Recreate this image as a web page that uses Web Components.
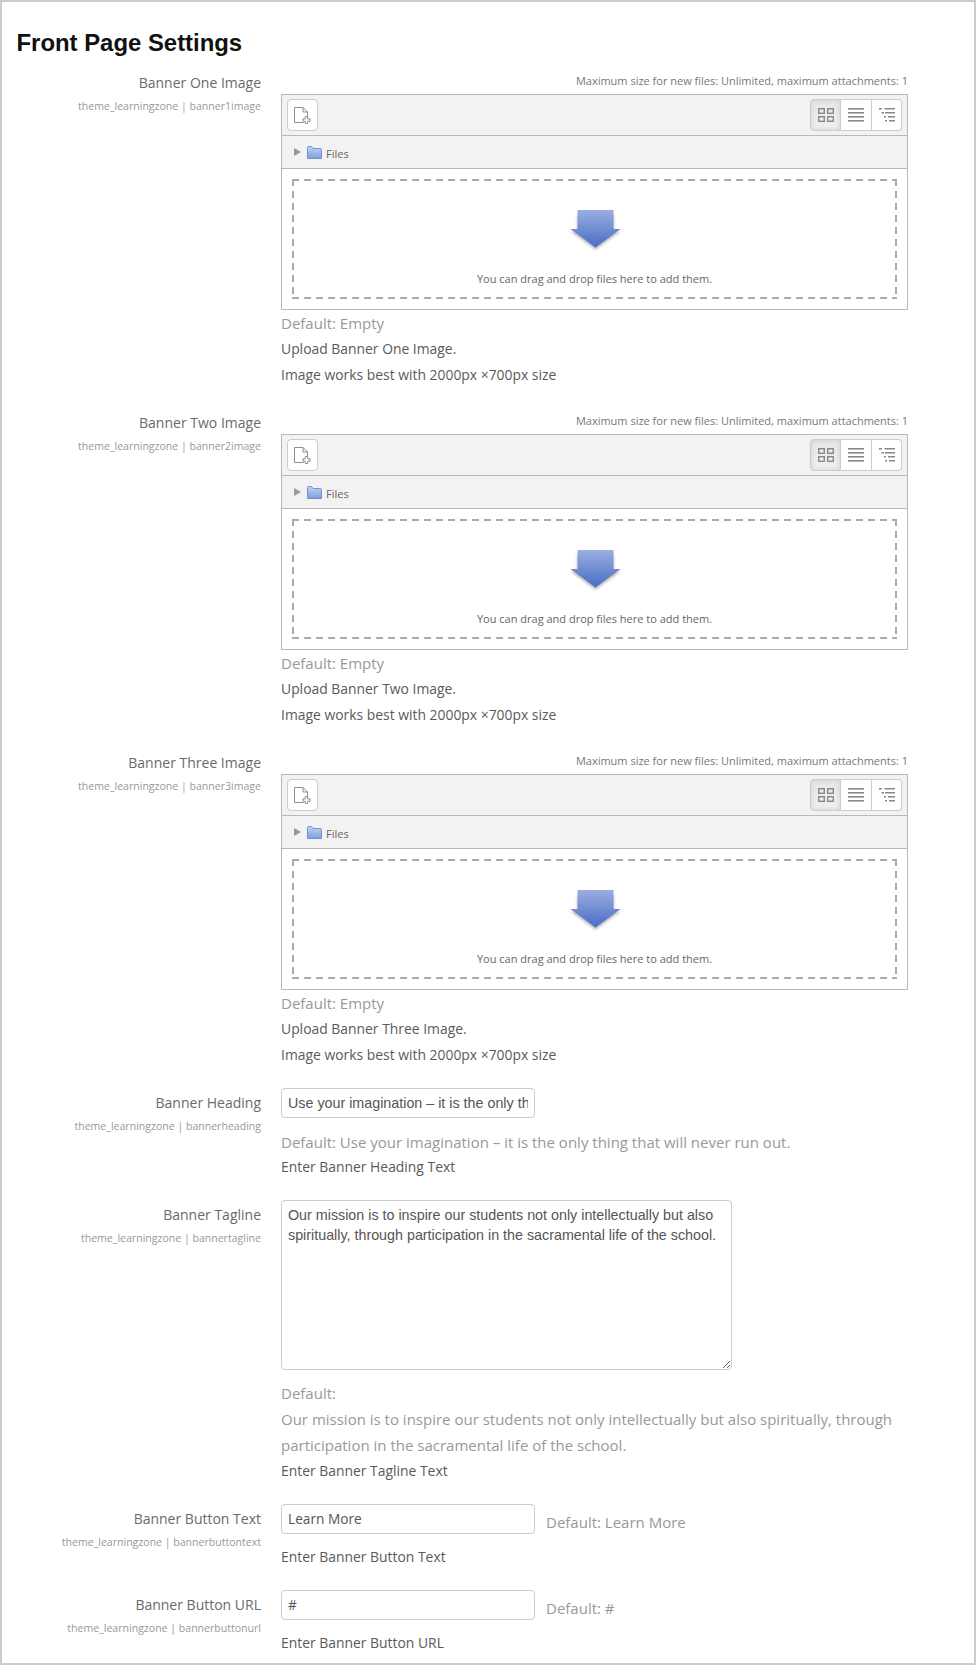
<!DOCTYPE html>
<html lang="en">
<head>
<meta charset="utf-8">
<title>Front Page Settings</title>
<style>
html, body { margin: 0; padding: 0; background: #fff; }
body { font-family: "Open Sans", sans-serif; color: #555; }
</style>
</head>
<body>
<settings-page heading="Front Page Settings">
    <setting-row label="Banner One Image" name="theme_learningzone | banner1image">
        <file-picker></file-picker>
        <setting-default block>Default: Empty</setting-default>
        <setting-note>Upload Banner One Image.</setting-note>
        <setting-note>Image works best with 2000px ×700px size</setting-note>
    </setting-row>
    <setting-row label="Banner Two Image" name="theme_learningzone | banner2image">
        <file-picker></file-picker>
        <setting-default block>Default: Empty</setting-default>
        <setting-note>Upload Banner Two Image.</setting-note>
        <setting-note>Image works best with 2000px ×700px size</setting-note>
    </setting-row>
    <setting-row label="Banner Three Image" name="theme_learningzone | banner3image">
        <file-picker></file-picker>
        <setting-default block>Default: Empty</setting-default>
        <setting-note>Upload Banner Three Image.</setting-note>
        <setting-note>Image works best with 2000px ×700px size</setting-note>
    </setting-row>
    <setting-row label="Banner Heading" name="theme_learningzone | bannerheading">
        <text-field sans>Use your imagination – it is the only th</text-field>
        <setting-default block spaced>Default: Use your imagination – it is the only thing that will never run out.</setting-default>
        <setting-note>Enter Banner Heading Text</setting-note>
    </setting-row>
    <setting-row label="Banner Tagline" name="theme_learningzone | bannertagline">
        <text-area>Our mission is to inspire our students not only intellectually but also spiritually, through participation in the sacramental life of the school.</text-area>
        <setting-default block spaced flush>Default:<br>Our mission is to inspire our students not only intellectually but also spiritually, through participation in the sacramental life of the school.</setting-default>
        <setting-note>Enter Banner Tagline Text</setting-note>
    </setting-row>
    <setting-row label="Banner Button Text" name="theme_learningzone | bannerbuttontext">
        <field-line>
            <text-field>Learn More</text-field>
            <setting-default>Default: Learn More</setting-default>
        </field-line>
        <setting-note spaced>Enter Banner Button Text</setting-note>
    </setting-row>
    <setting-row label="Banner Button URL" name="theme_learningzone | bannerbuttonurl">
        <field-line>
            <text-field>#</text-field>
            <setting-default>Default: #</setting-default>
        </field-line>
        <setting-note spaced>Enter Banner Button URL</setting-note>
    </setting-row>
</settings-page>

<script>
class SettingsPage extends HTMLElement {
    constructor() {
        super();
        this.attachShadow({mode: 'open'});
        this.shadowRoot.innerHTML = `
        <style>
        :host {
            display: block;
            box-sizing: border-box;
            height: 1665px;
            border: 2px solid #ccc;
            background: #fff;
            overflow: hidden;
        }
        h2 {
            margin: 0;
            padding: 28px 0 12px 14.5px;
            font: bold 23.9px/26px "Liberation Sans", Arial, sans-serif;
            color: #111;
        }
        </style>
        <h2></h2>
        <slot></slot>
        `;
        this.shadowRoot.querySelector("h2").textContent = this.getAttribute("heading");
    }
}

class SettingRow extends HTMLElement {
    constructor() {
        super();
        this.attachShadow({mode: 'open'});
        this.shadowRoot.innerHTML = `
        <style>
        :host {
            display: grid;
            grid-template-columns: 259px 627px;
            column-gap: 20px;
            padding-bottom: 20px;
        }
        .title { text-align: right; padding-top: 2px; }
        .label { font-size: 14px; line-height: 26px; color: #6a6a6a; }
        .name { font-size: 10.55px; line-height: 18px; margin-top: 1px; color: #999; }
        </style>
        <div class="title">
            <div class="label"></div>
            <div class="name"></div>
        </div>
        <div class="body"><slot></slot></div>
        `;
        this.shadowRoot.querySelector(".label").textContent = this.getAttribute("label");
        this.shadowRoot.querySelector(".name").textContent = this.getAttribute("name");
    }
}

class FilePicker extends HTMLElement {
    constructor() {
        super();
        this.attachShadow({mode: 'open'});
        this.shadowRoot.innerHTML = `
        <style>
        :host { display: block; font-size: 11px; color: #666; }
        .limit { height: 26px; line-height: 26px; text-align: right; color: #777; }
        .box { box-sizing: border-box; height: 216px; border: 1px solid #b8b8b8; display: flex; flex-direction: column; }
        .toolbar {
            height: 41px; flex: none; box-sizing: border-box; padding: 4px 5px 0;
            display: flex; justify-content: space-between; align-items: flex-start;
            background: #f2f2f2; border-bottom: 1px solid #b8b8b8;
        }
        button {
            padding: 0; margin: 0; background: #fff; display: flex; align-items: center; justify-content: center;
            height: 32px; box-sizing: border-box; border: 1px solid #ccc; border-radius: 4px;
        }
        .add { width: 31px; }
        .views { display: flex; }
        .views button { width: 31px; border-radius: 0; border-left: 0; }
        .views button:first-child {
            border-left: 1px solid #ccc; border-radius: 4px 0 0 4px;
            background: linear-gradient(#e6e6e6, #f1f1f1); box-shadow: inset 0 0 5px #ccc;
        }
        .views button:last-child { border-radius: 0 4px 4px 0; width: 30px; }
        .path {
            height: 33px; flex: none; box-sizing: border-box; padding-left: 12px;
            display: flex; align-items: center; gap: 6px;
            background: #f2f2f2; border-bottom: 1px solid #b8b8b8;
        }
        .files { margin-left: -2px; padding-top: 3px; }
        .well { flex: 1; padding: 10px; display: flex; }
        .drop {
            flex: 1; display: flex; flex-direction: column; align-items: center;
            background:
                linear-gradient(to right, #aaa 7px, transparent 7px) 0 0 / 12px 2px repeat-x,
                linear-gradient(to right, #aaa 7px, transparent 7px) 0 100% / 12px 2px repeat-x,
                linear-gradient(#aaa 7px, transparent 7px) 0 0 / 2px 12px repeat-y,
                linear-gradient(#aaa 7px, transparent 7px) 100% 0 / 2px 12px repeat-y;
        }
        .drop svg { margin-top: 30px; }
        .hint { margin-top: 17px; line-height: 18px; }
        </style>
        <div class="limit">Maximum size for new files: Unlimited, maximum attachments: 1</div>
        <div class="box">
            <div class="toolbar">
                <button class="add" aria-label="Add">
                    <svg width="17" height="18" viewBox="0 0 17 18" fill="none" stroke="#808080" stroke-width=".9">
                        <path d="M.5 1.5H9L13.5 6V10.5M.5 1.5V16.5H9.5M9 1.5V6H13.5"/>
                        <path d="M11.3 10.5h2.4v2.4h2.4v2.4h-2.4v2.2h-2.4v-2.2H9V12.9h2.3z" fill="#fff"/>
                    </svg>
                </button>
                <div class="views">
                    <button aria-label="Icons">
                        <svg width="16" height="14" viewBox="0 0 16 14" fill="none" stroke="#888" stroke-width="1.4">
                            <rect x=".7" y=".7" width="5.6" height="4.6"/><rect x="9.7" y=".7" width="5.6" height="4.6"/>
                            <rect x=".7" y="8.7" width="5.6" height="4.6"/><rect x="9.7" y="8.7" width="5.6" height="4.6"/>
                        </svg>
                    </button>
                    <button aria-label="List">
                        <svg width="16" height="14" viewBox="0 0 16 14" fill="#888">
                            <rect y="0" width="16" height="1.6"/><rect y="4" width="16" height="1.6"/>
                            <rect y="8" width="16" height="1.6"/><rect y="12" width="16" height="1.6"/>
                        </svg>
                    </button>
                    <button aria-label="Tree">
                        <svg width="16" height="14" viewBox="0 0 16 14" fill="#888">
                            <rect x="0" y="0" width="3" height="1.5"/><rect x="5.5" y="0" width="10.5" height="1.5"/>
                            <rect x="2.5" y="4" width="2.5" height="1.5"/><rect x="6" y="4" width="10" height="1.5"/>
                            <rect x="5" y="8" width="2" height="1.5"/><rect x="9" y="8" width="7" height="1.5"/>
                            <rect x="6" y="12" width="2" height="1.5"/><rect x="10" y="12" width="6" height="1.5"/>
                        </svg>
                    </button>
                </div>
            </div>
            <div class="path">
                <svg width="7" height="8" viewBox="0 0 7 8"><path d="M0 0 7 4 0 8z" fill="#999"/></svg>
                <svg width="15" height="13" viewBox="0 0 15 13">
                    <defs><linearGradient id="folder" x1="0" y1="0" x2="0" y2="1">
                        <stop offset="0" stop-color="#c3d3f0"/><stop offset="1" stop-color="#7d9fdc"/>
                    </linearGradient></defs>
                    <path d="M.5 12.5V1.5q0-1 1-1h3l1.5 2h7.5q1 0 1 1v9z" fill="url(#folder)" stroke="#5c82cc" stroke-width=".8"/>
                </svg>
                <span class="files">Files</span>
            </div>
            <div class="well">
                <div class="drop">
                    <svg width="52" height="44" viewBox="0 0 52 44">
                        <defs>
                            <linearGradient id="arrow" x1="0" y1="0" x2="0" y2="1">
                                <stop offset="0" stop-color="#9aaee0"/><stop offset="1" stop-color="#4a6cc6"/>
                            </linearGradient>
                            <filter id="soft" x="-20%" y="-20%" width="140%" height="150%"><feGaussianBlur stdDeviation="1.5"/></filter>
                        </defs>
                        <path d="M8.5 4H44.5V20H51.5L26.5 38.5 1.5 20H8.5z" fill="#000" opacity=".3" filter="url(#soft)" transform="translate(0 2)"/>
                        <path d="M8.5 1H44.5V20H51.5L26.5 38.5 1.5 20H8.5z" fill="url(#arrow)"/>
                    </svg>
                    <div class="hint">You can drag and drop files here to add them.</div>
                </div>
            </div>
        </div>
        `;
    }
}

class SettingDefault extends HTMLElement {
    constructor() {
        super();
        this.attachShadow({mode: 'open'});
        this.shadowRoot.innerHTML = `
        <style>
        :host { display: block; font-size: 15px; line-height: 26px; color: #999; }
        :host([spaced]) { margin: 11px 0 -1px; }
        :host([flush]) { margin: 10px 0 0; }
        :host(:not([block])) { margin: 5px 0 -1px 11px; }
        </style>
        <slot></slot>
        `;
    }
}

class SettingNote extends HTMLElement {
    constructor() {
        super();
        this.attachShadow({mode: 'open'});
        this.shadowRoot.innerHTML = `
        <style>
        :host { display: block; font-size: 13.9px; line-height: 26px; color: #5a5a5a; }
        :host([spaced]) { margin-top: 10px; }
        </style>
        <slot></slot>
        `;
    }
}

class FieldLine extends HTMLElement {
    constructor() {
        super();
        this.attachShadow({mode: 'open'});
        this.shadowRoot.innerHTML = `
        <style>:host { display: flex; align-items: flex-start; }</style>
        <slot></slot>
        `;
    }
}

class TextField extends HTMLElement {
    constructor() {
        super();
        this.attachShadow({mode: 'open'});
        this.shadowRoot.innerHTML = `
        <style>
        :host {
            display: block; flex: none; box-sizing: border-box; width: 254px; height: 30px;
            border: 1px solid #ccc; border-radius: 4px; padding: 0 6px; background: #fff;
            font-size: 13.7px; line-height: 28px; color: #555; white-space: nowrap;
        }
        :host([sans]) { font-family: "Liberation Sans", Arial, sans-serif; font-size: 14.3px; }
        div { overflow: hidden; }
        </style>
        <div><slot></slot></div>
        `;
    }
}

class TextArea extends HTMLElement {
    constructor() {
        super();
        this.attachShadow({mode: 'open'});
        this.shadowRoot.innerHTML = `
        <style>
        :host { display: block; }
        textarea {
            display: block; box-sizing: border-box; width: 451px; height: 170px; margin: 0;
            border: 1px solid #ccc; border-radius: 4px; padding: 4px 6px;
            font: 14.3px/20px "Liberation Sans", Arial, sans-serif; color: #555; background: #fff;
            outline: none;
        }
        </style>
        <textarea></textarea>
        `;
        this.shadowRoot.querySelector("textarea").textContent = this.textContent.trim();
    }
}

window.customElements.define("settings-page", SettingsPage);
window.customElements.define("setting-row", SettingRow);
window.customElements.define("file-picker", FilePicker);
window.customElements.define("setting-default", SettingDefault);
window.customElements.define("setting-note", SettingNote);
window.customElements.define("field-line", FieldLine);
window.customElements.define("text-field", TextField);
window.customElements.define("text-area", TextArea);
</script>
</body>
</html>
